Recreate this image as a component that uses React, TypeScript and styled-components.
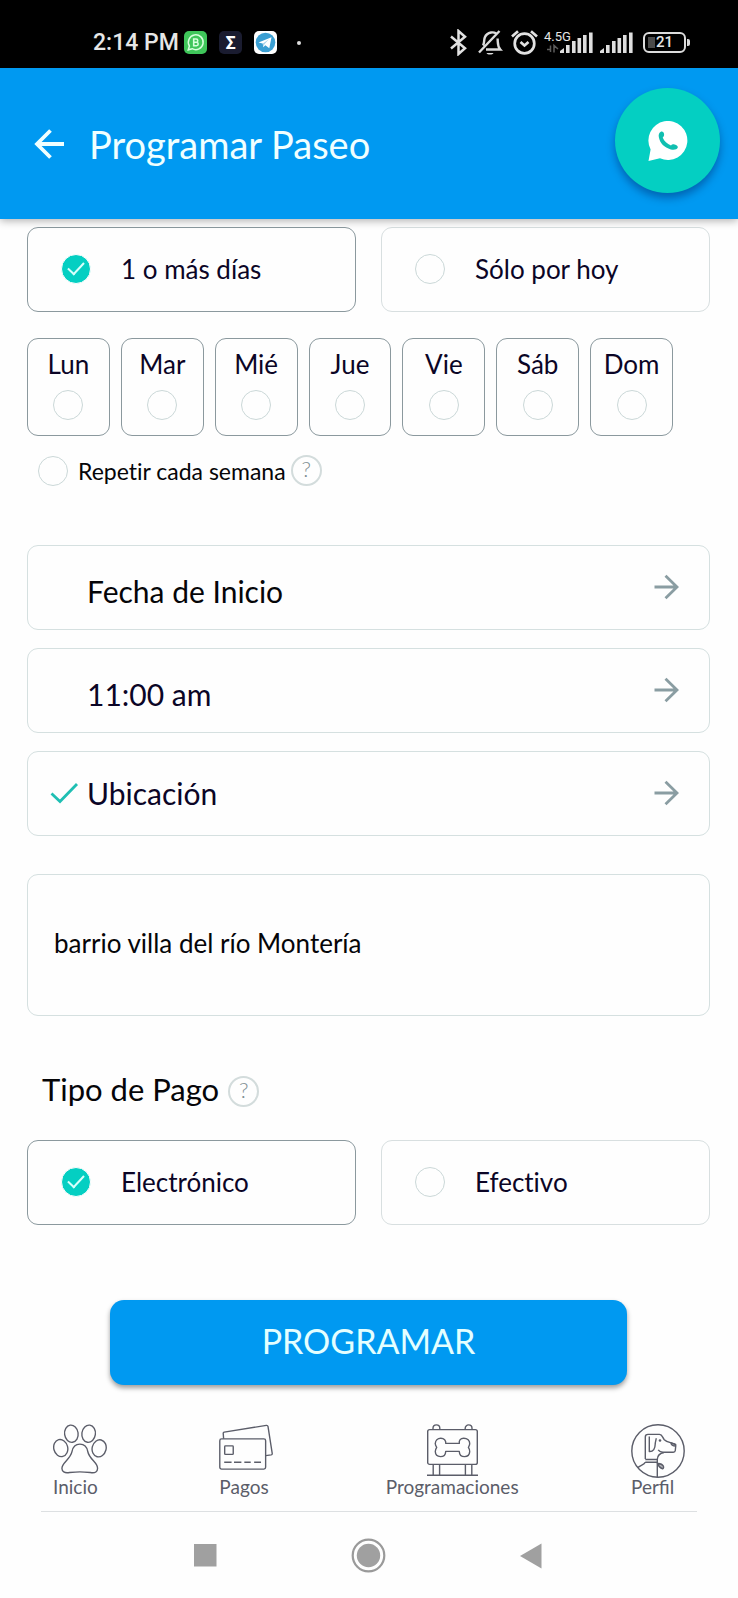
import React from "react";
import styled, { createGlobalStyle } from "styled-components";

const Global = createGlobalStyle`
  *, *::before, *::after { box-sizing: border-box; }
  body { margin: 0; background: #fefefe; font-family: Lato, "Open Sans", sans-serif; color: #050508; }
  button, input, textarea { font: inherit; color: inherit; margin: 0; }
  button { background: none; border: 0; padding: 0; cursor: pointer; text-align: left; }
  svg { display: block; flex: none; }
`;

const BLUE = "#0099f1";
const TEAL = "#04cfc2";
const NAVY = "#0b0526";

/* ---------- status bar ---------- */
const StatusBar = styled.div`
  display: flex;
  align-items: center;
  justify-content: space-between;
  height: 68px;
  padding: 17px 48px 0 93px;
  background: #000;
  color: #e6e6e6;
  font-family: Roboto, sans-serif;
`;
const StatusGroup = styled.div<{ $gap: number }>`
  display: flex;
  align-items: center;
  gap: ${(p) => p.$gap}px;
`;
const Clock = styled.span`
  width: 79px;
  font-size: 23px;
  line-height: 24px;
  font-weight: 500;
  white-space: nowrap;
`;
const SigmaTile = styled.span`
  display: grid;
  place-items: center;
  width: 23px;
  height: 23px;
  border-radius: 5px;
  background: #1a1c30;
  color: #fff;
  font-size: 18px;
  line-height: 22px;
  font-weight: 700;
`;
const Dot = styled.span`
  width: 4px;
  height: 4px;
  margin-left: 8px;
  border-radius: 50%;
  background: #ddd;
`;
const Network = styled.div`
  position: relative;
`;
const NetworkLabel = styled.span`
  position: absolute;
  left: 0;
  top: 0;
  font-size: 13px;
  line-height: 12px;
`;
const Battery = styled.div`
  position: relative;
  display: grid;
  place-items: center;
  width: 43px;
  height: 21px;
  margin-right: 4px;
  border: 2px solid #dcdcdc;
  border-radius: 6px;
  font-size: 15px;
  line-height: 17px;
  font-weight: 500;
  background: linear-gradient(#4a4a4a, #4a4a4a) 3px center / 7px 11px no-repeat;
  &::after {
    content: "";
    position: absolute;
    right: -6px;
    top: 5px;
    width: 3px;
    height: 7px;
    border-radius: 0 2px 2px 0;
    background: #dcdcdc;
  }
`;

/* ---------- header ---------- */
const Header = styled.header`
  position: relative;
  display: flex;
  align-items: center;
  height: 151px;
  padding: 0 18px 0 34px;
  background: ${BLUE};
  color: #f0ffff;
  box-shadow: 0 2px 8px rgba(0, 0, 0, 0.3);
`;
const Title = styled.h1`
  flex: 1;
  margin: 0 0 0 24px;
  font-size: 38px;
  line-height: 42px;
  font-weight: 400;
`;
const ChatButton = styled.button`
  display: grid;
  place-items: center;
  align-self: flex-start;
  width: 105px;
  height: 105px;
  margin-top: 20px;
  border-radius: 50%;
  background: ${TEAL};
  box-shadow: 0 5px 9px rgba(0, 0, 60, 0.35);
`;

/* ---------- form ---------- */
const Form = styled.form`
  display: flex;
  flex-direction: column;
  padding: 8px 28px 0 27px;
  font-variant-ligatures: none;
`;
const OptionRow = styled.div`
  display: grid;
  grid-template-columns: 1fr 1fr;
  gap: 25px;
`;
const Option = styled.label<{ $active?: boolean }>`
  display: flex;
  align-items: center;
  gap: 30px;
  height: 85px;
  padding: 0 33px 1px;
  border: 1px solid ${(p) => (p.$active ? "#8b999e" : "#d8dfe0")};
  border-radius: 11px;
  color: ${NAVY};
  font-size: 26px;
  line-height: 32px;
`;
const Tick = styled.input`
  appearance: none;
  position: relative;
  flex: none;
  width: 30px;
  height: 30px;
  border: 1px solid #cbd8d8;
  border-radius: 50%;
  &:checked {
    border: 1px solid #fefefe;
    background: ${TEAL};
  }
  &:checked::after {
    content: "";
    position: absolute;
    left: 6px;
    top: 7px;
    width: 16px;
    height: 9px;
    border: solid #d8fffb;
    border-width: 0 0 2px 2px;
    transform: rotate(-47deg);
  }
`;
const Days = styled.div`
  display: grid;
  grid-template-columns: repeat(7, 1fr);
  gap: 11px;
  margin-top: 26px;
  padding-right: 37px;
`;
const Day = styled.label`
  display: flex;
  flex-direction: column;
  align-items: center;
  gap: 10px;
  height: 98px;
  padding-top: 9px;
  border: 1px solid #8b999e;
  border-radius: 11px;
  color: ${NAVY};
  font-size: 26px;
  line-height: 32px;
`;
const RepeatRow = styled.div`
  display: flex;
  align-items: center;
  gap: 5px;
  margin-top: 19px;
  padding-left: 11px;
`;
const RepeatLabel = styled.label`
  display: flex;
  align-items: center;
  gap: 10px;
  font-size: 23px;
  line-height: 30px;
`;
const Help = styled.button`
  width: 31px;
  height: 31px;
  padding-bottom: 3px;
  border: 2px solid #d3dcdc;
  border-radius: 50%;
  color: #7f8f93;
  font-size: 22px;
  line-height: 24px;
  font-weight: 300;
  text-align: center;
`;
const Fields = styled.div`
  display: flex;
  flex-direction: column;
  gap: 18px;
  margin-top: 59px;
`;
const Field = styled.button`
  display: flex;
  align-items: center;
  height: 85px;
  padding: 0 30px 2px 22px;
  border: 1px solid #d5e0e0;
  border-radius: 11px;
`;
const FieldMark = styled.span`
  display: flex;
  align-items: center;
  width: 37px;
`;
const FieldText = styled.span<{ $filled?: boolean; $low?: boolean }>`
  flex: 1;
  padding-top: ${(p) => (p.$low ? 8 : 0)}px;
  color: ${(p) => (p.$filled ? NAVY : "#050508")};
  font-size: 30px;
  line-height: 36px;
`;
const Address = styled.textarea`
  height: 142px;
  margin-top: 38px;
  padding: 52px 26px;
  border: 1px solid #d5e0e0;
  border-radius: 11px;
  background: none;
  resize: none;
  outline: none;
  overflow: hidden;
  font-size: 26px;
  line-height: 32px;
`;
const SectionTitle = styled.div`
  display: flex;
  align-items: center;
  gap: 9px;
  margin: 60px 0 33px;
  padding-left: 15px;
`;
const Heading = styled.h2`
  margin: -8px 0 -4px;
  padding-bottom: 2px;
  font-size: 31px;
  line-height: 36px;
  font-weight: 400;
`;
const Submit = styled.button`
  height: 85px;
  margin: 75px 83px 0;
  padding-bottom: 4px;
  border-radius: 14px;
  background: ${BLUE};
  box-shadow: 0 3px 5px rgba(0, 0, 0, 0.38);
  color: #e4ffff;
  font-size: 34px;
  line-height: 42px;
  text-align: center;
`;

/* ---------- bottom navigation ---------- */
const Nav = styled.nav`
  display: flex;
  justify-content: space-between;
  margin: 39px 41px 0;
  padding: 0 12px 15px;
  border-bottom: 1px solid #dde0e2;
`;
const NavItem = styled.a<{ $center?: boolean }>`
  display: flex;
  flex-direction: column;
  align-items: ${(p) => (p.$center ? "center" : "flex-start")};
  color: #5b5d69;
  text-decoration: none;
  font-size: 19px;
  line-height: 18px;
`;
const SystemBar = styled.div`
  display: flex;
  align-items: center;
  justify-content: space-between;
  padding: 26px 196px 24px 194px;
`;

const ArrowRight = () => (
  <svg width="25" height="26" viewBox="0 0 25 26" fill="none" stroke="#8a9da2" strokeWidth="2.8">
    <path d="M.5 13H23M11.5 1.8 23 13 11.5 24.2" />
  </svg>
);

const Bars = ({ x = 0 }: { x?: number }) => (
  <g fill="#dedede">
    <path d={`M${x} 22v-2l4-3v5z`} />
    <rect x={x + 6} y="14" width="3.6" height="8" />
    <rect x={x + 12} y="10" width="3.6" height="12" />
    <rect x={x + 17.5} y="7" width="3.6" height="15" />
    <rect x={x + 23} y="4" width="3.6" height="18" />
    <rect x={x + 29} y="1.5" width="3.6" height="20.5" />
  </g>
);

const strokeProps = { fill: "none", stroke: "#5b5d69", strokeWidth: 1.4, strokeLinejoin: "round" as const };

const PawIcon = () => (
  <svg width="54" height="54" viewBox="0 0 55 54" {...strokeProps}>
    <ellipse cx="18.7" cy="9.4" rx="6.9" ry="8.8" transform="rotate(-8 18.7 9.4)" />
    <ellipse cx="36.3" cy="9.4" rx="6.9" ry="8.8" transform="rotate(8 36.3 9.4)" />
    <ellipse cx="7.9" cy="24" rx="7.1" ry="8.8" transform="rotate(-14 7.9 24)" />
    <ellipse cx="47" cy="24.3" rx="7.1" ry="8.8" transform="rotate(14 47 24.3)" />
    <path d="M27.4 20c-4.4 0-7.2 3-8 7.500-.8 4-3 6.500-6 9.700-2.600 2.800-4.400 5-4.300 7.600.1 3.300 2.800 4.700 6.400 4.300 4.600-.5 7.800-.9 11.900-.9s7.300.4 11.900.9c3.600.4 6-1 6.100-4.300.1-2.600-1.400-4.800-4-7.600-3-3.200-5.200-5.700-6-9.700-.8-4.500-3.600-7.500-8-7.500z" />
  </svg>
);

const CardsIcon = () => (
  <svg width="54" height="54" viewBox="0 0 55 54" {...strokeProps}>
    <rect x=".8" y="14.7" width="46.7" height="30.7" rx="1.8" />
    <path d="M4.700 14.500 4.300 9.200q-.1-1.200 1-1.400L48.200.9q1.400-.2 1.700 1.100l4.300 27.400q.2 1.400-1.100 1.600l-5.500.7" />
    <rect x="5.8" y="21.8" width="8.7" height="8.7" rx=".8" />
    <path d="M5.300 38.400h7.500m2.500 0h7.500m3 0h6.500m3.500 0h7" />
  </svg>
);

const BoardIcon = () => (
  <svg width="51" height="54" viewBox="0 0 51 54" {...strokeProps}>
    <rect x=".7" y="5.6" width="49.6" height="34.8" rx="2" />
    <path d="M6 5.500V4.300a3.400 3.400 0 0 1 6.800 0v1.200M38.200 5.500V4.300a3.400 3.400 0 0 1 6.800 0v1.200M6.200 40.400V51M12.600 40.400V51M38.400 40.400V51M44.800 40.400V51M0 51.200h51" />
    <path d="M18.700 19.400h13.600c-.5-3 1.200-5.200 4.400-5.200 3.800 0 6.100 2.300 6 5.200 0 1.700-.8 2.600-1.300 4 .8 1.200 1.500 2.500 1.300 4.200-.2 3-2.300 5-5.100 5-3.200 0-5.200-1.800-5.300-5.200H18.700c-.1 3.400-2.200 5.200-5.300 5.200-2.900 0-5-2-5.100-5 0-1.700.6-3 1.400-4.200-.8-1.300-1.500-2.300-1.400-4 .1-3 2.300-5.200 5.500-5.200s5.400 2.200 4.900 5.200z" />
  </svg>
);

const DogIcon = () => (
  <svg width="54" height="54" viewBox="0 0 54 54" {...strokeProps}>
    <circle cx="27" cy="27" r="26.2" />
    <path d="M14.300 35V13q0-2.600 2.700-2.600h11.500c2.800 0 3 3.200 4.800 5.300 2.600 2.600 6 2.600 10 4.200q1.500.7 1.400 2.300l-.4 4.300q-.2 1.800-2 1.800H32c-2.500 0-3.700-.8-4.800-2.400M33 28.500c-4 .8-6.600 3-6.700 6.800v18M14.300 35.500h12M14.300 38.300h12M14.300 38.300c-1 2.600-5 3-7.600 5.400" />
    <path d="M18.300 12.500v15c4.200.2 5.800-3 5.900-7.200.1-3 .9-4 1-6" />
    <path d="M40 18.800c.3 2.200 1.600 3.200 4.500 3.200l.2-1.600zM26.500 39.500c2 .2 4.600.3 5.700 2.300.6 1.200.2 2.500-.6 3-2.500-.8-4-2.400-5.100-5.300z" fill="#5b5d69" fillOpacity=".45" />
    <circle cx="29" cy="16.5" r="1.3" fill="#5b5d69" stroke="none" />
  </svg>
);

const days = ["Lun", "Mar", "Mié", "Jue", "Vie", "Sáb", "Dom"];

export default function App() {
  return (
    <>
      <Global />
      <StatusBar>
        <StatusGroup $gap={12}>
          <Clock>2:14 PM</Clock>
          <svg width="23" height="23" viewBox="0 0 23 23">
            <rect width="23" height="23" rx="5" fill="#3fc65a" />
            <path d="M4.300 18.800 5.400 15a7.400 7.400 0 1 1 2.800 2.700z" fill="none" stroke="#d6ffdc" strokeWidth="1.5" />
            <path d="M9.700 8h2.400a1.600 1.600 0 0 1 0 3.300H9.700zm0 3.300h2.800a1.700 1.700 0 0 1 0 3.400H9.700z" fill="none" stroke="#d6ffdc" strokeWidth="1.6" />
          </svg>
          <SigmaTile>Σ</SigmaTile>
          <svg width="23" height="23" viewBox="0 0 23 23">
            <rect width="23" height="23" rx="5" fill="#fff" />
            <circle cx="11.5" cy="11.5" r="9.8" fill="#3a9fd3" />
            <path d="M4.500 11.500 17.500 6.200l-2.200 11-4-3-2 2-.6-3.700z" fill="#fff" />
            <path d="m8.900 12.600 6-4.300-4.500 5-.9 2.500z" fill="#a9d3ea" />
          </svg>
          <Dot />
        </StatusGroup>
        <StatusGroup $gap={6}>
          <svg width="22" height="27" viewBox="0 0 22 27" fill="none" stroke="#e2e2e2" strokeWidth="2.5">
            <path d="M1 7.500 15 19.300 8.500 25V2L15 7.700 1 19.500" />
          </svg>
          <svg width="27" height="27" viewBox="0 0 27 27" fill="none" stroke="#dcdcdc" strokeWidth="2.4">
            <path d="M1 23.500 21.500 2M5 16.500c1.500-2 .8-5.500 1.800-8C8 5.300 10.300 4 13 3.500c2-.4 3.600 0 5 .8M8 20.500h14.300c-3-3.300-2.300-6-2.700-11" />
            <path d="M8.500 24h7c-1 2-6 2-7 0z" fill="#dcdcdc" stroke="none" />
          </svg>
          <svg width="27" height="27" viewBox="0 0 27 27" fill="none" stroke="#e2e2e2" strokeWidth="2.7">
            <circle cx="13.5" cy="14.5" r="9.8" />
            <path d="M1 7.500 7 2.200M26 7.500l-6-5.300M9.500 13l4 3.500 4-3.500" />
          </svg>
          <Network>
            <svg width="50" height="23" viewBox="0 0 50 23">
              <Bars x={16} />
              <path d="M3 18.500h3.500v-4M6.500 14.500V21M10 21.500v-7l4 3.500" fill="none" stroke="#5c5c5c" strokeWidth="1.5" />
            </svg>
            <NetworkLabel>4.5G</NetworkLabel>
          </Network>
          <svg width="37" height="23" viewBox="0 0 37 23">
            <Bars />
          </svg>
          <Battery>21</Battery>
        </StatusGroup>
      </StatusBar>

      <Header>
        <button type="button" aria-label="Volver">
          <svg width="31" height="30" viewBox="0 0 31 30" fill="none" stroke="#f0ffff" strokeWidth="3.8">
            <path d="M30 15H3M16.500 1.500 3 15l13.500 13.500" />
          </svg>
        </button>
        <Title>Programar Paseo</Title>
        <ChatButton type="button" aria-label="WhatsApp">
          <svg width="40" height="40" viewBox="0 0 40 40">
            <path d="M.5 40 2.600 28.500A19.500 19.500 0 1 1 12 37.300z" fill="#fff" />
            <path d="M12.500 11c1.600-1 3.400 0 3.600 2.300.1 1.800-.6 2.500-1.400 3.300 1.600 3.800 4.300 6.400 8.300 7.900 1-1.200 1.800-1.500 3.600-.9 2.200.7 3.400 1.600 3.200 3-.8 2-4 2.800-7 1.800C16.300 26.400 12 22.500 10.800 16c-.4-2.300.3-4.200 1.700-5z" fill="#10bfb0" />
          </svg>
        </ChatButton>
      </Header>

      <Form onSubmit={(e) => e.preventDefault()}>
        <OptionRow>
          <Option $active>
            <Tick type="radio" name="when" defaultChecked />1 o más días
          </Option>
          <Option>
            <Tick type="radio" name="when" />Sólo por hoy
          </Option>
        </OptionRow>

        <Days>
          {days.map((d) => (
            <Day key={d}>
              {d}
              <Tick type="checkbox" />
            </Day>
          ))}
        </Days>

        <RepeatRow>
          <RepeatLabel>
            <Tick type="checkbox" />
            Repetir cada semana
          </RepeatLabel>
          <Help type="button">?</Help>
        </RepeatRow>

        <Fields>
          <Field type="button">
            <FieldMark />
            <FieldText $low>Fecha de Inicio</FieldText>
            <ArrowRight />
          </Field>
          <Field type="button">
            <FieldMark />
            <FieldText $low $filled>11:00 am</FieldText>
            <ArrowRight />
          </Field>
          <Field type="button">
            <FieldMark>
              <svg width="29" height="22" viewBox="0 0 29 22" fill="none" stroke="#1fbfb3" strokeWidth="2.8">
                <path d="m1.500 11.500 8.500 8L27 2" />
              </svg>
            </FieldMark>
            <FieldText $filled>Ubicación</FieldText>
            <ArrowRight />
          </Field>
        </Fields>

        <Address aria-label="Dirección" rows={1} spellCheck={false} defaultValue="barrio villa del río Montería" />

        <SectionTitle>
          <Heading>Tipo de Pago</Heading>
          <Help type="button">?</Help>
        </SectionTitle>

        <OptionRow>
          <Option $active>
            <Tick type="radio" name="payment" defaultChecked />Electrónico
          </Option>
          <Option>
            <Tick type="radio" name="payment" />Efectivo
          </Option>
        </OptionRow>

        <Submit type="submit">PROGRAMAR</Submit>
      </Form>

      <Nav>
        <NavItem href="#inicio">
          <PawIcon />
          Inicio
        </NavItem>
        <NavItem href="#pagos">
          <CardsIcon />
          Pagos
        </NavItem>
        <NavItem href="#programaciones" $center>
          <BoardIcon />
          Programaciones
        </NavItem>
        <NavItem href="#perfil">
          <DogIcon />
          Perfil
        </NavItem>
      </Nav>

      <SystemBar>
        <button type="button" aria-label="Recientes">
          <svg width="23" height="23" viewBox="0 0 23 23"><rect width="22.5" height="22.5" fill="#a0a0a0" /></svg>
        </button>
        <button type="button" aria-label="Pantalla principal">
          <svg width="35" height="35" viewBox="0 0 35 35">
            <circle cx="17.5" cy="17.5" r="15.8" fill="none" stroke="#9a9a9a" strokeWidth="2.2" />
            <circle cx="17.5" cy="17.5" r="11.7" fill="#a0a0a0" />
          </svg>
        </button>
        <button type="button" aria-label="Atrás">
          <svg width="22" height="26" viewBox="0 0 22 26"><path d="M0 13 21.500.5v25z" fill="#a0a0a0" /></svg>
        </button>
      </SystemBar>
    </>
  );
}
